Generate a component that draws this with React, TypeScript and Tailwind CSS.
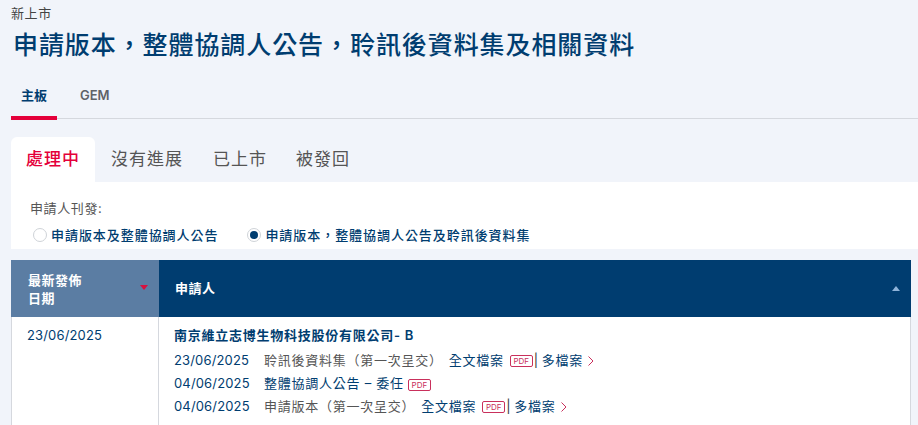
const cjk = 'font-["Inter","Noto_Sans_CJK_TC",sans-serif]';

const PdfBadge = () => (
  <span className="ml-[6px] inline-flex h-[12px] w-[23px] items-center justify-center rounded-[2px] border border-[#c9305c] text-[8px] leading-none tracking-normal text-[#c9305c]">
    PDF
  </span>
);

const Chevron = () => (
  <svg width="8" height="12" viewBox="0 0 8 12" className="ml-[4px] inline-block" fill="none" stroke="#c9305c" strokeWidth="1">
    <path d="M1.5 1.5 L6 6 L1.5 10.5" />
  </svg>
);

const Radio = ({ checked }: { checked?: boolean }) => (
  <span className="flex h-[14px] w-[14px] items-center justify-center rounded-full border border-[#cfd3d8] bg-white">
    {checked && <span className="h-[8px] w-[8px] rounded-full bg-[#003d70]" />}
  </span>
);

const FileRow = ({ date, title, full }: { date: string; title: string; full?: boolean }) => (
  <div className="flex h-[23px] items-center text-[13px] tracking-[0.75px]">
    <span className="w-[90px] tracking-[0.15px] text-[#003d70]">{date}</span>
    <span className={full ? 'text-[#555]' : 'text-[#003d70]'}>{title}</span>
    {full ? (
      <>
        <span className="ml-[6px] text-[#003d70]">全文檔案</span>
        <PdfBadge />
        <span className="ml-[1px] text-[#333]">|</span>
        <span className="ml-[3px] text-[#003d70]">多檔案</span>
        <Chevron />
      </>
    ) : (
      <span className="-ml-[2px]">
        <PdfBadge />
      </span>
    )}
  </div>
);

export default function App() {
  return (
    <div className={`h-[425px] w-[918px] overflow-hidden bg-[#f1f4fa] ${cjk}`}>
      <div className="pl-[11px] pt-[5px]">
        <div className="text-[13px] leading-[16px] tracking-[0.6px] text-[#444]">新上市</div>
        <h1 className="ml-[2px] mt-[7px] text-[25px] font-medium leading-[34px] tracking-[0.92px] text-[#003d70]">
          申請版本，整體協調人公告，聆訊後資料集及相關資料
        </h1>
      </div>

      {/* board tabs */}
      <div className="ml-[11px] mt-[16px] flex h-[41px] border-b border-[#d5d8de]">
        <div className="-mb-[2px] flex w-[46px] items-start justify-center border-b-[4px] border-[#e4003a] pt-[8px] text-[13px] font-semibold text-[#003d70]">
          主板
        </div>
        <div className="ml-[23px] pt-[8px] text-[13px] font-semibold text-[#5f6368]">GEM</div>
      </div>

      {/* status tabs */}
      <div className="ml-[11px] mt-[18px] flex h-[45px] items-center text-[17px] tracking-[1px] text-[#555]">
        <div className="flex h-full w-[84px] items-center justify-center rounded-t-[6px] bg-white font-medium text-[#e4003a]">
          處理中
        </div>
        <div className="ml-[16px]">沒有進展</div>
        <div className="ml-[30px]">已上市</div>
        <div className="ml-[29px]">被發回</div>
      </div>

      <div className="ml-[11px] h-[67px] bg-white pl-[19px] pt-[17px]">
        <div className="text-[13px] leading-[18px] tracking-[0.6px] text-[#555]">申請人刊發:</div>
        <div className="ml-[3px] mt-[9px] flex items-center text-[13px] leading-[18px] tracking-[0.95px] text-[#003d70]">
          <Radio />
          <span className="ml-[4px] font-medium">申請版本及整體協調人公告</span>
          <span className="ml-[29px]"><Radio checked /></span>
          <span className="ml-[4px] font-medium">申請版本，整體協調人公告及聆訊後資料集</span>
        </div>
      </div>

      {/* table */}
      <div className="ml-[11px] mr-[7px] mt-[11px]">
        <div className="flex h-[57px] text-[13px] font-semibold text-white">
          <div className="flex w-[148px] items-center justify-between bg-[#5b7da3] pl-[17px] pr-[11px]">
            <span className="leading-[18px] tracking-[0.5px]">最新發佈<br />日期</span>
            <span className="mb-[2px] h-0 w-0 border-x-[4px] border-t-[5px] border-x-transparent border-t-[#d6123f]" />
          </div>
          <div className="flex flex-1 items-center justify-between bg-[#003d70] pl-[16px] pr-[11px]">
            <span className="tracking-[0.5px]">申請人</span>
            <span className="h-0 w-0 border-x-[4px] border-b-[5px] border-x-transparent border-b-[#8fb4d9]" />
          </div>
        </div>
        <div className="flex h-[108px] border-x border-[#d5d8de] bg-white">
          <div className="w-[147px] border-r border-[#d5d8de] pl-[15px] pt-[9px] text-[13px] leading-[18px] tracking-[0.15px] text-[#003d70]">
            23/06/2025
          </div>
          <div className="flex-1 pl-[15px] pt-[8px]">
            <div className="mb-[4px] text-[13px] font-semibold leading-[20px] tracking-[0.75px] text-[#003d70]">
              南京維立志博生物科技股份有限公司- B
            </div>
            <FileRow date="23/06/2025" title="聆訊後資料集（第一次呈交）" full />
            <FileRow date="04/06/2025" title="整體協調人公告 – 委任" />
            <FileRow date="04/06/2025" title="申請版本（第一次呈交）" full />
          </div>
        </div>
      </div>
    </div>
  );
}
